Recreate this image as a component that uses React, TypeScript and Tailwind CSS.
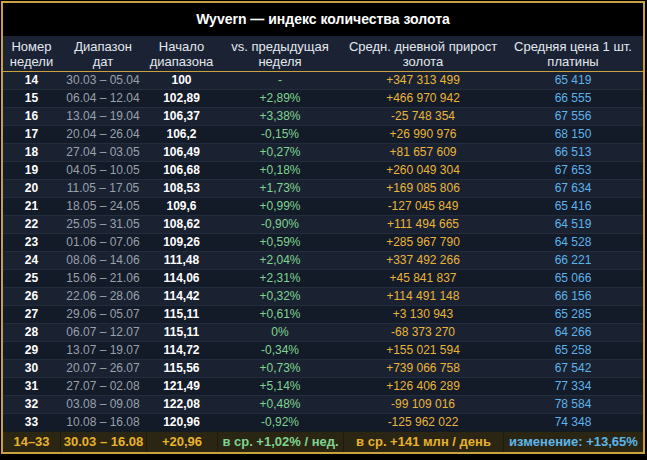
import React from "react";

type Row = [string, string, string, string, string, string];

const rows: Row[] = [
  ["14", "30.03 – 05.04", "100", "-", "+347 313 499", "65 419"],
  ["15", "06.04 – 12.04", "102,89", "+2,89%", "+466 970 942", "66 555"],
  ["16", "13.04 – 19.04", "106,37", "+3,38%", "-25 748 354", "67 556"],
  ["17", "20.04 – 26.04", "106,2", "-0,15%", "+26 990 976", "68 150"],
  ["18", "27.04 – 03.05", "106,49", "+0,27%", "+81 657 609", "66 513"],
  ["19", "04.05 – 10.05", "106,68", "+0,18%", "+260 049 304", "67 653"],
  ["20", "11.05 – 17.05", "108,53", "+1,73%", "+169 085 806", "67 634"],
  ["21", "18.05 – 24.05", "109,6", "+0,99%", "-127 045 849", "65 416"],
  ["22", "25.05 – 31.05", "108,62", "-0,90%", "+111 494 665", "64 519"],
  ["23", "01.06 – 07.06", "109,26", "+0,59%", "+285 967 790", "64 528"],
  ["24", "08.06 – 14.06", "111,48", "+2,04%", "+337 492 266", "66 221"],
  ["25", "15.06 – 21.06", "114,06", "+2,31%", "+45 841 837", "65 066"],
  ["26", "22.06 – 28.06", "114,42", "+0,32%", "+114 491 148", "66 156"],
  ["27", "29.06 – 05.07", "115,11", "+0,61%", "+3 130 943", "65 285"],
  ["28", "06.07 – 12.07", "115,11", "0%", "-68 373 270", "64 266"],
  ["29", "13.07 – 19.07", "114,72", "-0,34%", "+155 021 594", "65 258"],
  ["30", "20.07 – 26.07", "115,56", "+0,73%", "+739 066 758", "67 542"],
  ["31", "27.07 – 02.08", "121,49", "+5,14%", "+126 406 289", "77 334"],
  ["32", "03.08 – 09.08", "122,08", "+0,48%", "-99 109 016", "78 584"],
  ["33", "10.08 – 16.08", "120,96", "-0,92%", "-125 962 022", "74 348"],
];

const grid = "grid grid-cols-[57px_86px_71px_126px_160px_140px]";

export default function App() {
  return (
    <div className="w-[647px] h-[460px] bg-black p-px" style={{ fontFamily: '"Liberation Sans", Arial, sans-serif' }}>
      <div className="w-[644px] border-2 border-[#c9a23c] bg-black flex flex-col">
        <div className="h-[33px] flex items-center justify-center text-white font-bold text-[14px]">
          Wyvern — индекс количества золота
        </div>
        <div className={`${grid} h-[36px] bg-[#1a2233] border-b border-[#c9a23c] text-[#e3e8ef] text-[13px] leading-[15px]`}>
          <div className="flex items-center justify-center text-center">Номер<br />недели</div>
          <div className="flex items-center justify-center text-center">Диапазон<br />дат</div>
          <div className="flex items-center justify-center text-center">Начало<br />диапазона</div>
          <div className="flex items-center justify-center text-center">vs. предыдущая<br />неделя</div>
          <div className="flex items-center justify-center text-center">Средн. дневной прирост<br />золота</div>
          <div className="flex items-center justify-center text-center">Средняя цена 1 шт.<br />платины</div>
        </div>
        {rows.map((r, i) => (
          <div
            key={r[0]}
            className={`${grid} h-[18px] border-b border-[#232d3d] text-[12px] leading-[17px] ${i % 2 === 0 ? "bg-[#1a2232]" : "bg-[#131a28]"}`}
          >
            <div className="text-center text-white font-bold">{r[0]}</div>
            <div className="text-center text-[#98a1ad]">{r[1]}</div>
            <div className="text-center text-white font-bold">{r[2]}</div>
            <div className="text-center text-[#7fd491]">{r[3]}</div>
            <div className="text-center text-[#e8b43a]">{r[4]}</div>
            <div className="text-center text-[#5db3ea]">{r[5]}</div>
          </div>
        ))}
        <div className={`${grid} h-[21px] bg-[#2b2614] border-t border-[#161a1e] text-[13px] leading-[20px] font-bold -mt-px`}>
          <div className="text-center text-[#e8b22c]">14–33</div>
          <div className="text-center text-[#e8b22c] border-l border-[#1d1a10]">30.03 – 16.08</div>
          <div className="text-center text-[#e8b22c] border-l border-[#1d1a10]">+20,96</div>
          <div className="text-center text-[#7fd48f] border-l border-[#1d1a10] whitespace-nowrap">в ср. +1,02% / нед.</div>
          <div className="text-center text-[#e8b22c] border-l border-[#1d1a10] whitespace-nowrap">в ср. +141 млн / день</div>
          <div className="text-center text-[#5cb6ea] border-l border-[#1d1a10] whitespace-nowrap">изменение: +13,65%</div>
        </div>
      </div>
    </div>
  );
}
